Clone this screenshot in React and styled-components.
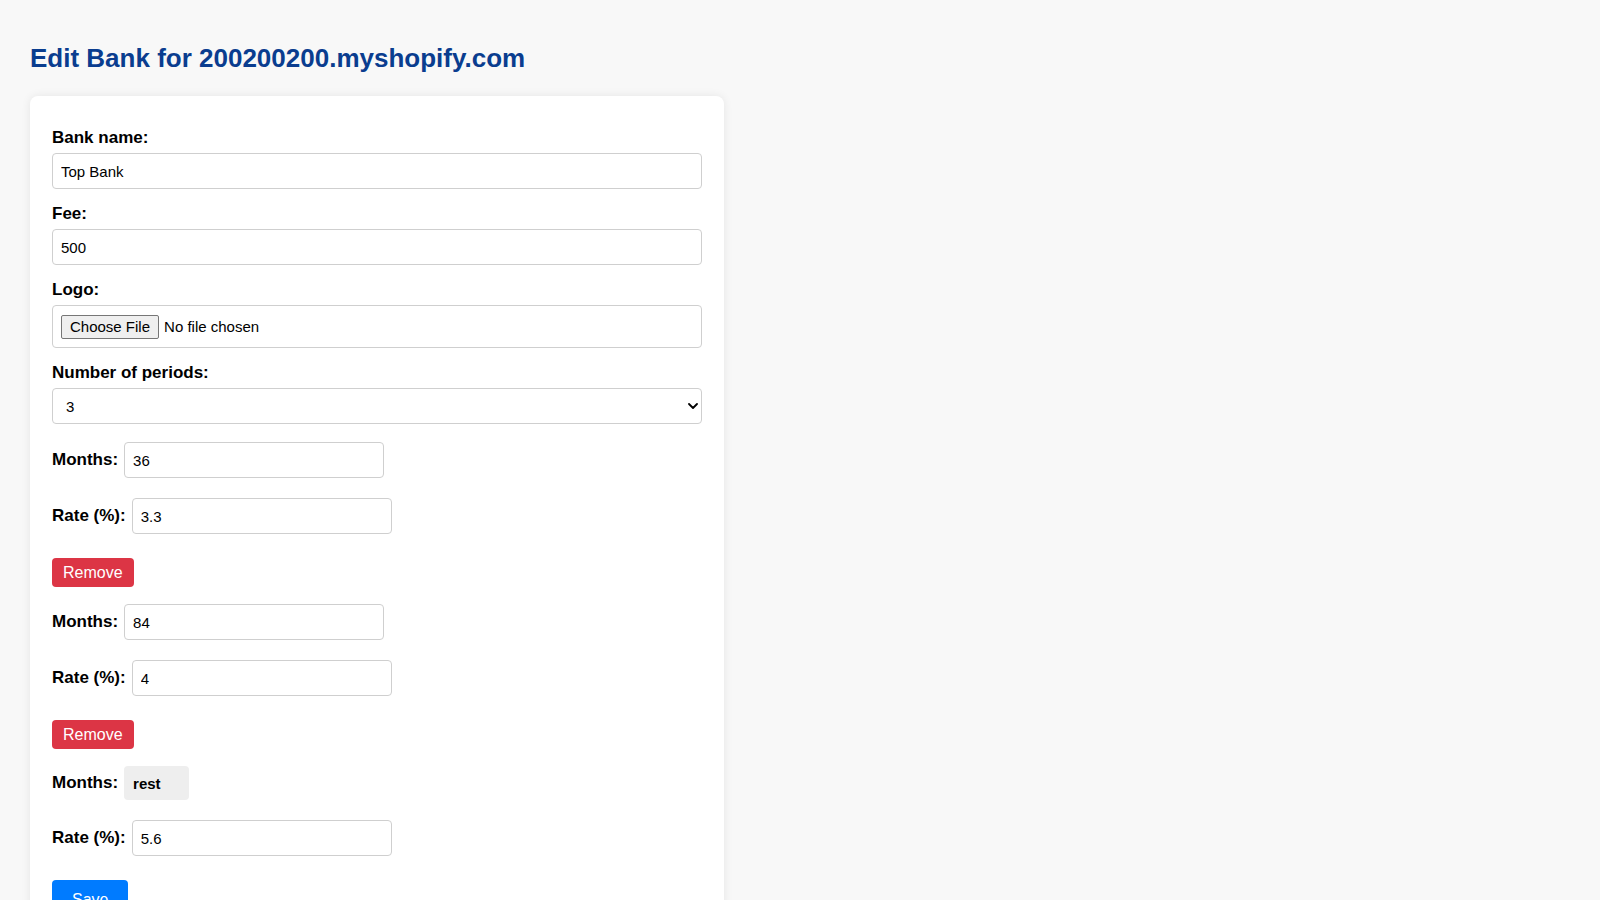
import React from "react";
import styled, { createGlobalStyle } from "styled-components";

const GlobalStyle = createGlobalStyle`
  html, body {
    margin: 0;
    padding: 0;
    background: #f8f8f8;
  }
  body {
    font-family: "Liberation Sans", Arial, sans-serif;
    color: #000;
  }
  * { box-sizing: border-box; }
`;

const Page = styled.div`
  padding: 43px 30px 0;
`;

const Title = styled.h1`
  margin: 0 0 22px;
  font-size: 26px;
  font-weight: bold;
  line-height: normal;
  color: #0a3d8f;
`;

const Card = styled.form`
  width: 694px;
  background: #fff;
  border-radius: 8px;
  box-shadow: 0 0 10px rgba(0, 0, 0, 0.08);
  padding: 32px 22px 22px;
`;

const Field = styled.div`
  display: flex;
  flex-direction: column;
  gap: 5px;
  margin-bottom: ${(p) => p.$spacing ?? 15}px;
`;

const Label = styled.label`
  font-size: 17px;
  font-weight: bold;
  line-height: normal;
  color: #000;
  white-space: nowrap;
`;

const TextInput = styled.input`
  display: block;
  width: ${(p) => p.$width || "100%"};
  height: 36px;
  padding: 0 8px;
  border: 1px solid #cfcfcf;
  border-radius: 4px;
  font-family: "Liberation Sans", Arial, sans-serif;
  font-size: 15px;
  color: #000;
  background: #fff;
  outline: none;
`;

const FileBox = styled.div`
  display: flex;
  align-items: center;
  height: 43px;
  padding: 0 8px;
  border: 1px solid #cfcfcf;
  border-radius: 4px;
  font-size: 15px;
`;

const FileButton = styled.button`
  height: 24px;
  padding: 0 8px;
  margin-right: 5px;
  font-family: "Liberation Sans", Arial, sans-serif;
  font-size: 15px;
  color: #000;
  background: #efefef;
  border: 1px solid #767676;
  border-radius: 2px;
`;

const FileStatus = styled.span`
  font-size: 15px;
  color: #000;
`;

const SelectWrap = styled.div`
  position: relative;
`;

const Select = styled.select`
  appearance: none;
  -webkit-appearance: none;
  display: block;
  width: 100%;
  height: 36px;
  padding: 0 30px 0 13px;
  border: 1px solid #cfcfcf;
  border-radius: 4px;
  font-family: "Liberation Sans", Arial, sans-serif;
  font-size: 15px;
  color: #000;
  background: #fff;
  outline: none;
`;

const Chevron = styled.svg`
  position: absolute;
  right: 4px;
  top: 50%;
  margin-top: -3px;
  width: 10px;
  height: 6px;
  pointer-events: none;
`;

const Period = styled.div`
  display: flex;
  flex-direction: column;
  align-items: flex-start;
  margin-bottom: ${(p) => (p.$last ? 0 : 17)}px;
`;

const Row = styled.div`
  display: flex;
  align-items: center;
  gap: 6px;
  margin-bottom: ${(p) => p.$mb}px;
`;

const RestBox = styled.span`
  display: inline-flex;
  align-items: center;
  width: 65px;
  height: 34px;
  padding: 0 9px;
  background: #eeeeee;
  border-radius: 4px;
  font-size: 15px;
  font-weight: bold;
  color: #000;
`;

const Button = styled.button`
  display: inline-block;
  border: none;
  border-radius: 4px;
  font-family: "Liberation Sans", Arial, sans-serif;
  font-size: 16px;
  line-height: 19px;
  color: #fff;
  background: ${(p) => (p.$variant === "danger" ? "#dc3545" : "#007bff")};
  padding: ${(p) => (p.$variant === "danger" ? "5px 11px" : "10px 20px")};
  cursor: pointer;
`;

const periods = [
  { months: "36", rate: "3.3" },
  { months: "84", rate: "4" },
  { months: "rest", rate: "5.6", rest: true },
];

export default function App() {
  return (
    <>
      <GlobalStyle />
      <Page>
        <Title>Edit Bank for 200200200.myshopify.com</Title>
        <Card onSubmit={(e) => e.preventDefault()}>
          <Field>
            <Label htmlFor="bank-name">Bank name:</Label>
            <TextInput id="bank-name" type="text" defaultValue="Top Bank" />
          </Field>
          <Field>
            <Label htmlFor="fee">Fee:</Label>
            <TextInput id="fee" type="text" defaultValue="500" />
          </Field>
          <Field>
            <Label>Logo:</Label>
            <FileBox>
              <FileButton type="button">Choose File</FileButton>
              <FileStatus>No file chosen</FileStatus>
            </FileBox>
          </Field>
          <Field $spacing={18}>
            <Label htmlFor="periods">Number of periods:</Label>
            <SelectWrap>
              <Select id="periods" defaultValue="3">
                <option value="1">1</option>
                <option value="2">2</option>
                <option value="3">3</option>
                <option value="4">4</option>
              </Select>
              <Chevron viewBox="0 0 10 6">
                <path
                  d="M1 1 L5 5 L9 1"
                  fill="none"
                  stroke="#000"
                  strokeWidth="1.8"
                  strokeLinecap="round"
                  strokeLinejoin="round"
                />
              </Chevron>
            </SelectWrap>
          </Field>

          {periods.map((p, i) => {
            const last = i === periods.length - 1;
            return (
              <Period key={i} $last={last}>
                <Row $mb={20}>
                  <Label>Months:</Label>
                  {p.rest ? (
                    <RestBox>{p.months}</RestBox>
                  ) : (
                    <TextInput $width="260px" type="text" defaultValue={p.months} />
                  )}
                </Row>
                <Row $mb={24}>
                  <Label>Rate (%):</Label>
                  <TextInput $width="260px" type="text" defaultValue={p.rate} />
                </Row>
                {last ? (
                  <Button type="submit" $variant="primary">Save</Button>
                ) : (
                  <Button type="button" $variant="danger">Remove</Button>
                )}
              </Period>
            );
          })}
        </Card>
      </Page>
    </>
  );
}
